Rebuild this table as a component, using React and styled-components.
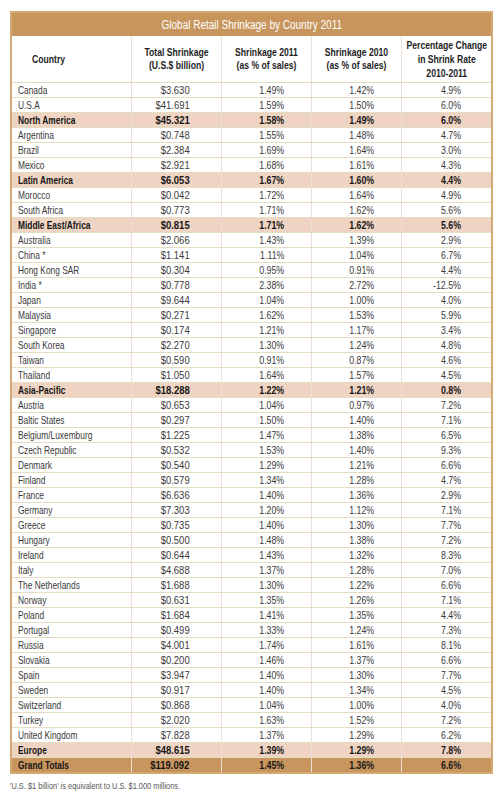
import React from 'react';
import styled, { createGlobalStyle } from 'styled-components';

const GlobalStyle = createGlobalStyle`
  body {
    margin: 0;
    background: #fff;
    font-family: "Liberation Sans", Arial, sans-serif;
  }
`;

const Page = styled.div`
  padding: 11px 6px 0 10px;
  width: 481px;
`;

const Table = styled.table`
  width: 481px;
  border-collapse: collapse;
  table-layout: fixed;
  border: 2px solid #d2aa74;
`;

// the source font is a narrow geometric face; squeeze Liberation Sans to match
const Squeeze = styled.span`
  display: inline-block;
  white-space: nowrap;
  transform: scaleX(${({ $s }) => $s || 0.78});
  transform-origin: ${({ $o }) => $o || 'left'} center;
`;

const Title = styled.th`
  height: 23px;
  padding: 0;
  background: #c8955d;
  color: #fff;
  font-weight: normal;
  font-size: 12.5px;
  text-align: center;
`;

const HeadCell = styled.th`
  height: 46px;
  padding: 0 0 0 ${({ $left }) => ($left ? '20px' : '0')};
  font-size: 11.5px;
  font-weight: bold;
  color: #1e1e1e;
  border-left: 1px solid #ece0d8;
  border-bottom: 1px solid #e2dcc0;
  vertical-align: middle;
`;

const HeadInner = styled.div`
  display: flex;
  flex-direction: column;
  align-items: ${({ $left }) => ($left ? 'flex-start' : 'center')};
  line-height: ${({ $lh }) => $lh || 13}px;
  white-space: nowrap;
  transform: scaleX(0.75);
  transform-origin: ${({ $left }) => ($left ? 'left' : 'center')} center;
`;

const rowBg = {
  region: '#efd4c4',
  total: '#c9955f',
  plain: '#fff',
};

const Row = styled.tr`
  background: ${({ $kind }) => rowBg[$kind]};
  font-weight: ${({ $kind }) => ($kind === 'plain' ? 'normal' : 'bold')};
  color: ${({ $kind }) => ($kind === 'plain' ? '#3a3a3a' : '#161616')};
`;

const Cell = styled.td`
  height: 14px;
  padding: 0 ${({ $pr }) => $pr || 0}px 0 ${({ $left }) => ($left ? 6 : 0)}px;
  font-size: 11px;
  line-height: 14px;
  overflow: visible;
  text-align: ${({ $left }) => ($left ? 'left' : 'right')};
  border-bottom: 1px solid #e4ddc2;
  border-left: 1px solid #ece0d8;
`;

const Note = styled.p`
  margin: 6px 0 0 0;
  font-size: 9.5px;
  color: #555;
`;

const rows = [
  ['Canada', '$3.630', '1.49%', '1.42%', '4.9%'],
  ['U.S.A', '$41.691', '1.59%', '1.50%', '6.0%'],
  ['North America', '$45.321', '1.58%', '1.49%', '6.0%', 'region'],
  ['Argentina', '$0.748', '1.55%', '1.48%', '4.7%'],
  ['Brazil', '$2.384', '1.69%', '1.64%', '3.0%'],
  ['Mexico', '$2.921', '1.68%', '1.61%', '4.3%'],
  ['Latin America', '$6.053', '1.67%', '1.60%', '4.4%', 'region'],
  ['Morocco', '$0.042', '1.72%', '1.64%', '4.9%'],
  ['South Africa', '$0.773', '1.71%', '1.62%', '5.6%'],
  ['Middle East/Africa', '$0.815', '1.71%', '1.62%', '5.6%', 'region'],
  ['Australia', '$2.066', '1.43%', '1.39%', '2.9%'],
  ['China *', '$1.141', '1.11%', '1.04%', '6.7%'],
  ['Hong Kong SAR', '$0.304', '0.95%', '0.91%', '4.4%'],
  ['India *', '$0.778', '2.38%', '2.72%', '-12.5%'],
  ['Japan', '$9.644', '1.04%', '1.00%', '4.0%'],
  ['Malaysia', '$0.271', '1.62%', '1.53%', '5.9%'],
  ['Singapore', '$0.174', '1.21%', '1.17%', '3.4%'],
  ['South Korea', '$2.270', '1.30%', '1.24%', '4.8%'],
  ['Taiwan', '$0.590', '0.91%', '0.87%', '4.6%'],
  ['Thailand', '$1.050', '1.64%', '1.57%', '4.5%'],
  ['Asia-Pacific', '$18.288', '1.22%', '1.21%', '0.8%', 'region'],
  ['Austria', '$0.653', '1.04%', '0.97%', '7.2%'],
  ['Baltic States', '$0.297', '1.50%', '1.40%', '7.1%'],
  ['Belgium/Luxemburg', '$1.225', '1.47%', '1.38%', '6.5%'],
  ['Czech Republic', '$0.532', '1.53%', '1.40%', '9.3%'],
  ['Denmark', '$0.540', '1.29%', '1.21%', '6.6%'],
  ['Finland', '$0.579', '1.34%', '1.28%', '4.7%'],
  ['France', '$6.636', '1.40%', '1.36%', '2.9%'],
  ['Germany', '$7.303', '1.20%', '1.12%', '7.1%'],
  ['Greece', '$0.735', '1.40%', '1.30%', '7.7%'],
  ['Hungary', '$0.500', '1.48%', '1.38%', '7.2%'],
  ['Ireland', '$0.644', '1.43%', '1.32%', '8.3%'],
  ['Italy', '$4.688', '1.37%', '1.28%', '7.0%'],
  ['The Netherlands', '$1.688', '1.30%', '1.22%', '6.6%'],
  ['Norway', '$0.631', '1.35%', '1.26%', '7.1%'],
  ['Poland', '$1.684', '1.41%', '1.35%', '4.4%'],
  ['Portugal', '$0.499', '1.33%', '1.24%', '7.3%'],
  ['Russia', '$4.001', '1.74%', '1.61%', '8.1%'],
  ['Slovakia', '$0.200', '1.46%', '1.37%', '6.6%'],
  ['Spain', '$3.947', '1.40%', '1.30%', '7.7%'],
  ['Sweden', '$0.917', '1.40%', '1.34%', '4.5%'],
  ['Switzerland', '$0.868', '1.04%', '1.00%', '4.0%'],
  ['Turkey', '$2.020', '1.63%', '1.52%', '7.2%'],
  ['United Kingdom', '$7.828', '1.37%', '1.29%', '6.2%'],
  ['Europe', '$48.615', '1.39%', '1.29%', '7.8%', 'region'],
  ['Grand Totals', '$119.092', '1.45%', '1.36%', '6.6%', 'total'],
];

// right padding and squeeze per numeric column
const pads = [31, 26, 26, 30];
const squeeze = [0.86, 0.8, 0.8, 0.8];

const App = () => (
  <Page>
    <GlobalStyle />
    <Table>
      <colgroup>
        <col style={{ width: 120 }} />
        <col style={{ width: 90 }} />
        <col style={{ width: 90 }} />
        <col style={{ width: 90 }} />
        <col style={{ width: 91 }} />
      </colgroup>
      <thead>
        <tr>
          <Title colSpan={5}>
            <Squeeze $s={0.8} $o="center">Global Retail Shrinkage by Country 2011</Squeeze>
          </Title>
        </tr>
        <tr>
          <HeadCell $left>
            <HeadInner $left>Country</HeadInner>
          </HeadCell>
          <HeadCell>
            <HeadInner>
              <span>Total Shrinkage</span>
              <span>(U.S.$ billion)</span>
            </HeadInner>
          </HeadCell>
          <HeadCell>
            <HeadInner>
              <span>Shrinkage 2011</span>
              <span>(as % of sales)</span>
            </HeadInner>
          </HeadCell>
          <HeadCell>
            <HeadInner>
              <span>Shrinkage 2010</span>
              <span>(as % of sales)</span>
            </HeadInner>
          </HeadCell>
          <HeadCell>
            <HeadInner $lh={14}>
              <span>Percentage Change</span>
              <span>in Shrink Rate</span>
              <span>2010-2011</span>
            </HeadInner>
          </HeadCell>
        </tr>
      </thead>
      <tbody>
        {rows.map(([name, ...vals]) => {
          const kind = vals[4] || 'plain';
          return (
            <Row key={name} $kind={kind}>
              <Cell $left>
                <Squeeze $s={0.76}>{name}</Squeeze>
              </Cell>
              {vals.slice(0, 4).map((v, i) => (
                <Cell key={i} $pr={pads[i]}>
                  <Squeeze $s={squeeze[i]} $o="right">{v}</Squeeze>
                </Cell>
              ))}
            </Row>
          );
        })}
      </tbody>
    </Table>
    <Note>
      <Squeeze $s={0.78}>'U.S. $1 billion' is equivalent to U.S. $1.000 millions.</Squeeze>
    </Note>
  </Page>
);

export default App;
